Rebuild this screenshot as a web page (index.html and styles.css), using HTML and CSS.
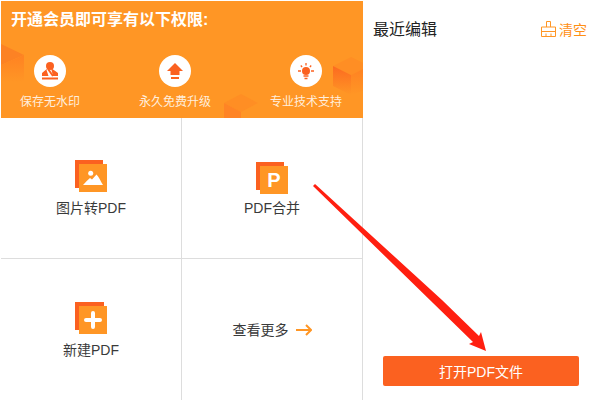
FILE: index.html
```html
<!DOCTYPE html>
<html lang="zh-CN">
<head>
<meta charset="utf-8">
<title>PDF</title>
<link rel="stylesheet" href="styles.css">
</head>
<body>
<div class="page">
  <main class="left">
    <section class="banner">
      <svg class="cubes" width="362" height="117" viewBox="0 0 362 117">
        <defs>
          <linearGradient id="fadeA" x1="0" y1="0" x2="0" y2="1"><stop offset="0" stop-color="#fc6a20"/><stop offset="1" stop-color="#ff9625"/></linearGradient>
          <linearGradient id="fadeB" x1="0" y1="0" x2="0" y2="1"><stop offset="0" stop-color="#ff8222"/><stop offset="1" stop-color="#ff9625"/></linearGradient>
        </defs>
        <path d="M0 43L23 54L0 64Z" fill="#fc8224"/>
        <path d="M0 64L23 54V81H0Z" fill="url(#fadeB)"/>
        <path d="M223 102L240 93L257 102L240 111Z" fill="#ff8e24"/>
        <path d="M223 102L240 111V117H223Z" fill="#ff8425"/>
        <path d="M332 65L350 56L362 62V68L350 74Z" fill="#ff8e24"/>
        <path d="M332 65L350 74V94L332 85Z" fill="url(#fadeA)"/>
        <path d="M350 74L362 68V90L350 94Z" fill="url(#fadeB)"/>
      </svg>
      <h1 class="banner-title">开通会员即可享有以下权限:</h1>
      <div class="perks">
        <div class="perk perk-short">
          <svg class="perk-icon" width="32" height="32" viewBox="0 0 32 32">
            <circle cx="16" cy="16" r="16" fill="#fff"/>
            <circle cx="16" cy="11" r="4" fill="#fb6120"/>
            <path d="M14 13L8 18V21H14.500L12.500 15ZM17 13L24 18V21H19Z" fill="#fb6120"/>
            <path d="M14 14L19 21" stroke="#fb6120" stroke-width="2" fill="none"/>
            <rect x="8" y="22.500" width="16" height="2" fill="#fb6120"/>
          </svg>
          <span class="perk-label">保存无水印</span>
        </div>
        <div class="perk">
          <svg class="perk-icon" width="32" height="32" viewBox="0 0 32 32">
            <circle cx="16" cy="16" r="16" fill="#fff"/>
            <path d="M16 8L24 16H20.500V20H11.500V16H8Z" fill="#fb6120"/>
            <rect x="12" y="22" width="8" height="2" fill="#fb6120"/>
          </svg>
          <span class="perk-label">永久免费升级</span>
        </div>
        <div class="perk">
          <svg class="perk-icon" width="32" height="32" viewBox="0 0 32 32">
            <circle cx="16" cy="16" r="16" fill="#fff"/>
            <circle cx="16" cy="16" r="4" fill="#fb6120"/>
            <path d="M16 8v2.500M8 16h3M21 16h3M10.800 10.500l1.300 1.500M21.200 10.500l-1.300 1.500M13.500 21h5M14.500 23.500h3" stroke="#fb6120" stroke-width="1.300" fill="none"/>
          </svg>
          <span class="perk-label">专业技术支持</span>
        </div>
      </div>
    </section>
    <section class="tools">
      <a class="tool">
        <svg class="tool-icon" width="32" height="32" viewBox="0 0 32 32">
          <rect width="28" height="28" fill="#fb6120"/>
          <rect x="4" y="4" width="28" height="28" fill="#ff9625"/>
          <circle cx="15.700" cy="13.300" r="2.500" fill="#fff"/>
          <path d="M8 25C10 23 13 19.500 15 18L17 19.500L21.500 14.500C24 17 26 22 28 25Z" fill="#fff"/>
        </svg>
        <span>图片转PDF</span>
      </a>
      <a class="tool tool-merge">
        <svg class="tool-icon" width="32" height="32" viewBox="0 0 32 32">
          <rect width="28" height="28" fill="#fb6120"/>
          <rect x="4" y="4" width="28" height="28" fill="#ff9625"/>
          <text class="tool-letter" x="18" y="25" text-anchor="middle">P</text>
        </svg>
        <span>PDF合并</span>
      </a>
      <a class="tool">
        <svg class="tool-icon" width="32" height="32" viewBox="0 0 32 32">
          <rect width="29" height="28" fill="#fb6120"/>
          <rect x="4" y="4" width="28" height="28" fill="#ff9625"/>
          <path d="M11 18H25M18 11V25" stroke="#fff" stroke-width="4" stroke-linecap="round" fill="none"/>
        </svg>
        <span>新建PDF</span>
      </a>
      <a class="tool tool-more">
        <span>查看更多</span>
        <svg width="16" height="12" viewBox="0 0 16 12">
          <path d="M0 6H15M10 1L15 6L10 11" stroke="#ff9625" stroke-width="2" fill="none"/>
        </svg>
      </a>
    </section>
  </main>
  <aside class="recent">
    <header class="recent-head">
      <h2 class="recent-title">最近编辑</h2>
      <a class="clear">
        <svg width="15" height="16" viewBox="0 0 15 16">
          <path d="M5.500 6V.5H9.500V6M.5 6H14.500V15.500H.5ZM.5 10.500H14.500M5 12.500V15.500M10 12.500V15.500" stroke="#ff9625" fill="none"/>
        </svg>
        <span>清空</span>
      </a>
    </header>
    <button class="open-btn">打开PDF文件</button>
  </aside>
  <svg class="pointer" width="600" height="400" viewBox="0 0 600 400">
    <path d="M313 186L315 184L442 300L479 336L481 332L486 351L469 344L473 342Z" fill="#ff1f10"/>
  </svg>
</div>
</body>
</html>
```
FILE: styles.css
```css
* { box-sizing: border-box; }
html, body { margin: 0; padding: 0; background: #fff; }
body {
  width: 600px;
  height: 400px;
  overflow: hidden;
  font-family: "Liberation Sans", "Noto Sans CJK SC", sans-serif;
  color: #3a3a3a;
}
.page {
  position: relative;
  display: flex;
  width: 600px;
  height: 400px;
  padding: 1px 0 0 1px;
}
.left {
  display: flex;
  flex-direction: column;
  width: 362px;
  flex: none;
}
.banner {
  position: relative;
  height: 117px;
  background: #ff9625;
  color: #fff;
  overflow: hidden;
  flex: none;
}
.cubes { position: absolute; left: 0; top: 0; }
.banner-title {
  position: relative;
  margin: 0;
  padding: 7px 0 0 10px;
  font-size: 16px;
  line-height: 23px;
  font-weight: 700;
}
.perks {
  position: relative;
  display: flex;
  gap: 59px;
  padding: 24px 0 0 19px;
}
.perk {
  display: flex;
  flex-direction: column;
  align-items: center;
  width: 72px;
}
.perk-short { width: 60px; }
.perk-label {
  margin-top: 7px;
  font-size: 12px;
  line-height: 16px;
  white-space: nowrap;
  color: #ffeedd;
}
.tools {
  flex: 1;
  display: grid;
  grid-template-columns: 181px 181px;
  grid-template-rows: 141px 141px;
}
.tool {
  display: flex;
  flex-direction: column;
  align-items: center;
  justify-content: center;
  font-size: 14px;
  line-height: 16px;
  border-right: 1px solid #ddd;
  border-bottom: 1px solid #ddd;
}
.tool:nth-child(n+3) { border-bottom: 0; }
.tool-icon { margin-bottom: 8px; }
.tool-merge .tool-icon { margin-top: 2px; margin-bottom: 6px; }
.tool-letter {
  font-family: "Liberation Sans", sans-serif;
  font-size: 20px;
  font-weight: 700;
  fill: #fff;
}
.tool-more {
  flex-direction: row;
  gap: 7px;
}
.recent {
  flex: 1;
  display: flex;
  flex-direction: column;
  padding: 19px 13px 14px 10px;
}
.recent-head {
  display: flex;
  align-items: center;
  justify-content: space-between;
  height: 20px;
}
.recent-title {
  margin: 0;
  font-size: 16px;
  font-weight: 400;
  line-height: 20px;
  color: #222;
}
.clear {
  display: flex;
  align-items: center;
  gap: 3px;
  margin-bottom: 3px;
  font-size: 14px;
  color: #ff8f14;
}
.open-btn {
  display: block;
  width: 196px;
  height: 30px;
  margin: auto 0 0 10px;
  padding: 0;
  border: 0;
  border-radius: 2px;
  background: #fb6120;
  color: #fff;
  font: inherit;
  font-size: 14px;
}
.pointer {
  position: absolute;
  left: 0;
  top: 0;
  pointer-events: none;
}
```
